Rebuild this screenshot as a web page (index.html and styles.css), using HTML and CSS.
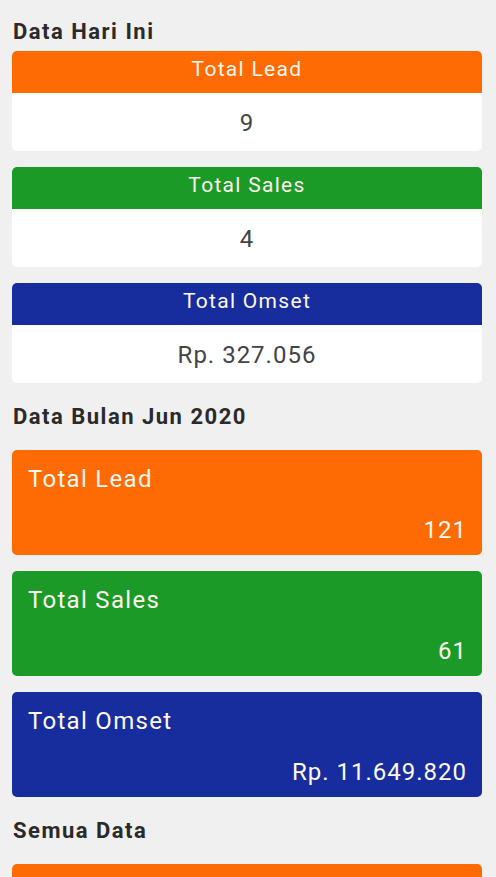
FILE: index.html
```html
<!DOCTYPE html>
<html lang="id">
<head>
    <meta charset="UTF-8">
    <meta name="viewport" content="width=device-width, initial-scale=1.0">
    <title>Dashboard</title>
    <link rel="stylesheet" href="styles.css">
</head>
<body>
    <div class="page">
        <h3 class="section-title first">Data Hari Ini</h3>

        <div class="box">
            <div class="box-head orange">Total Lead</div>
            <div class="box-body">9</div>
        </div>
        <div class="box">
            <div class="box-head green">Total Sales</div>
            <div class="box-body">4</div>
        </div>
        <div class="box">
            <div class="box-head blue">Total Omset</div>
            <div class="box-body">Rp. 327.056</div>
        </div>

        <h3 class="section-title">Data Bulan Jun 2020</h3>

        <div class="tile orange">
            <div class="tile-label">Total Lead</div>
            <div class="tile-value">121</div>
        </div>
        <div class="tile green">
            <div class="tile-label">Total Sales</div>
            <div class="tile-value">61</div>
        </div>
        <div class="tile blue">
            <div class="tile-label">Total Omset</div>
            <div class="tile-value">Rp. 11.649.820</div>
        </div>

        <h3 class="section-title">Semua Data</h3>

        <div class="tile orange">
            <div class="tile-label">Total Lead</div>
            <div class="tile-value">-</div>
        </div>
        <div class="tile green">
            <div class="tile-label">Total Sales</div>
            <div class="tile-value">-</div>
        </div>
        <div class="tile blue">
            <div class="tile-label">Total Omset</div>
            <div class="tile-value">-</div>
        </div>
    </div>
</body>
</html>
```

FILE: styles.css
```css
body {
    margin: 0;
    background-color: #f0f0f0;
    font-family: Roboto, "Noto Sans", Arial, sans-serif;
    color: #2b2b2b;
}

.page {
    padding: 0 14px 20px 12px;
}

.section-title {
    margin: 21px 0 20px 1px;
    font-size: 22px;
    line-height: 26px;
    font-weight: bold;
    letter-spacing: 1.5px;
    color: #2a2a2a;
}

.section-title.first {
    margin-top: 0;
    padding-top: 19px;
    margin-bottom: 6px;
}

.orange {
    background-color: #fe6a03;
}

.green {
    background-color: #1b9a27;
}

.blue {
    background-color: #182d9d;
}

/* small boxes, header + white body */
.box {
    margin-bottom: 16px;
    border-radius: 5px;
    overflow: hidden;
    background-color: #fff;
}

.box-head {
    padding: 6px 0 11px;
    font-size: 21px;
    line-height: 25px;
    letter-spacing: 1.3px;
    text-align: center;
    color: #fdf7ee;
}

.box-body {
    padding: 16px 0 14px;
    font-size: 24px;
    line-height: 28px;
    letter-spacing: 1px;
    text-align: center;
    color: #444;
}

/* big coloured tiles */
.tile {
    margin-bottom: 16px;
    padding: 15px 15px 11px 16px;
    border-radius: 5px;
    color: #fdf7ee;
}

.tile-label {
    font-size: 24px;
    line-height: 29px;
    letter-spacing: 1.3px;
}

.tile-value {
    margin-top: 22px;
    font-size: 24px;
    line-height: 28px;
    letter-spacing: 1px;
    text-align: right;
}
```
